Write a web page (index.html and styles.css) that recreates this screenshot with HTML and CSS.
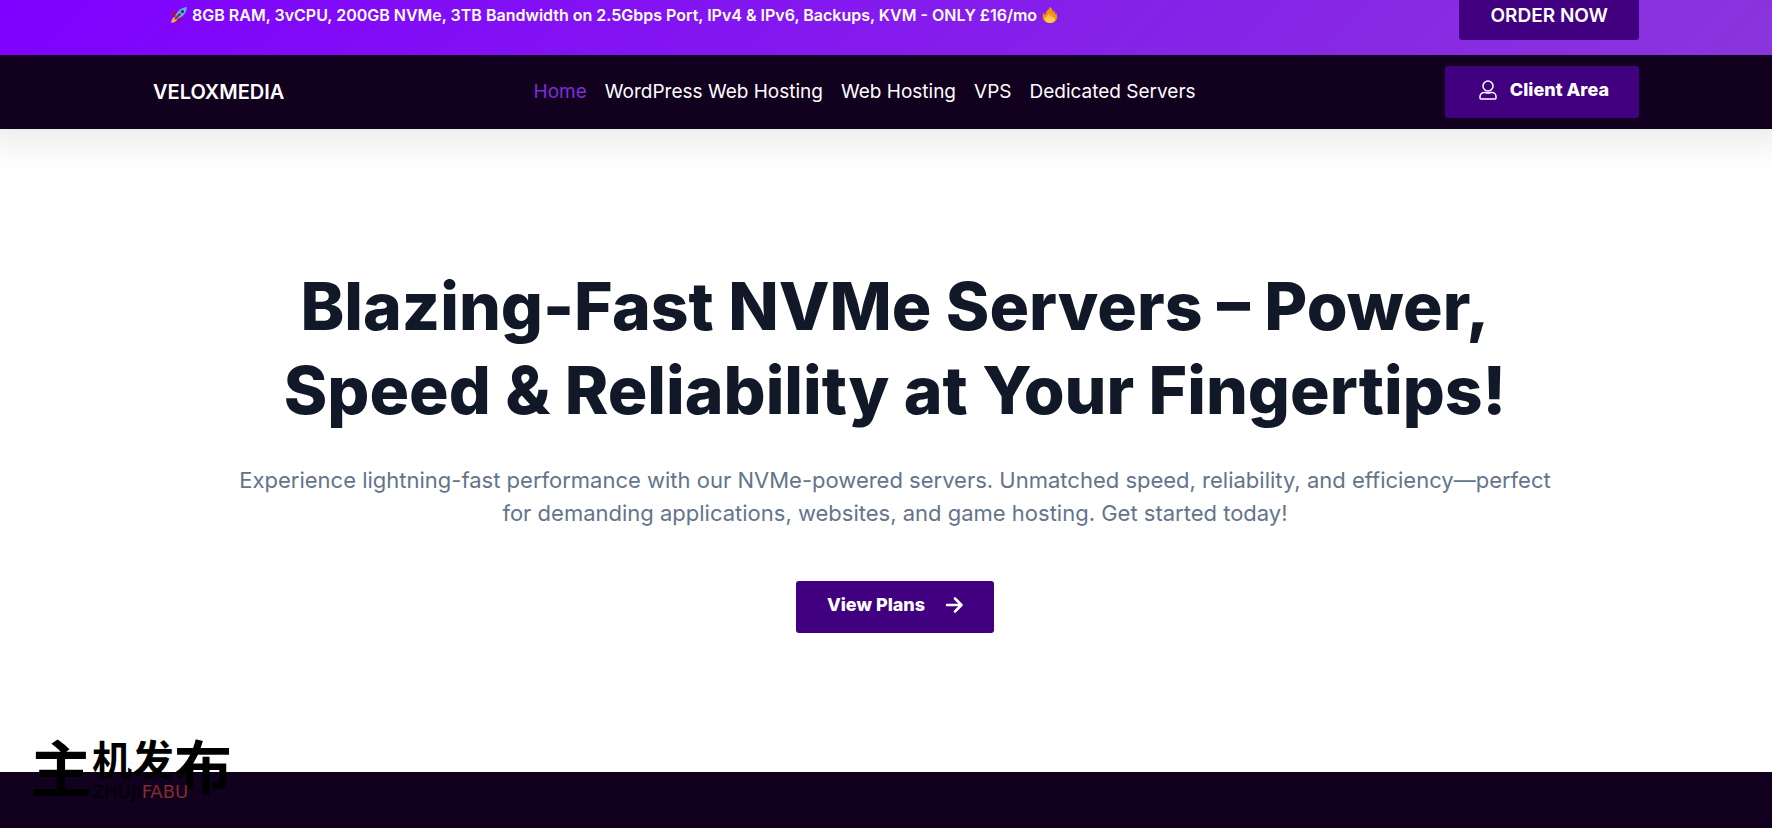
FILE: index.html
```html
<!DOCTYPE html>
<html lang="en">
<head>
<meta charset="utf-8">
<title>VeloxMedia</title>
<link rel="stylesheet" href="styles.css">
</head>
<body>
<aside class="promo">
  <div class="container promo-row">
    <p class="promo-text">
      <svg class="emoji" viewBox="0 0 16 16" aria-hidden="true"><path fill="#a5142b" d="M6 4 2 5.500.8 9l3.400-.8zM12 10l-1.500 4-3.700 1.500L8 12z"/><path fill="#55acee" d="M16 0c-5 .3-9.600 3.200-12 9.300L6.700 12C12.800 9.600 15.700 5 16 0z"/><path fill="#ffac33" d="M3.800 10C1.500 10.200.5 13 .2 15.800 3 15.500 5.800 14.500 6 12.200z"/><path fill="#a5142b" d="m8.500 6 1.500 1.500-6 5.200-.7-.7z"/><circle cx="11.500" cy="4.500" r="1.500" fill="#292f33"/></svg>
      <span>8GB RAM, 3vCPU, 200GB NVMe, 3TB Bandwidth on 2.5Gbps Port, IPv4 &amp; IPv6, Backups, KVM - ONLY £16/mo</span>
      <svg class="emoji" viewBox="0 0 16 16" aria-hidden="true"><path fill="#f4900c" d="M2.500 4.800c-.7 1.600-.3 2.500.3 3.100C4 7.500 3.500 5.500 5 3.700 6.200 2.300 8 2 7.300 0c2.700.9 3.500 3 3.400 5.600.8-.5 1-1.700.6-2.600 1.800 1 1.700 3.100 2 4.200.5-.5.8-1 .7-1.800 2 3.600 2.100 10.600-6 10.600C1 16-1.300 9 2.500 4.800z"/><path fill="#ffcc4d" d="M3 9.500c.4 1 1 1.300 1.600 1.100C4.900 9 6.200 8.500 6 6.500c1.600.8 2 2.300 1.700 4 1.300-.3 1-2 1-3 1.700 1 1.600 2.500 2 3.500.7-.1 1.200-.6 1.400-1.500C14 13 12 15.900 8 15.900S1.600 12.800 3 9.500z"/></svg>
    </p>
    <button class="btn btn-order" type="button">ORDER NOW</button>
  </div>
</aside>
<header class="header">
  <div class="container header-row">
    <a class="brand" href="#">VELOXMEDIA</a>
    <nav class="nav">
      <a class="active" href="#">Home</a>
      <a href="#">WordPress Web Hosting</a>
      <a href="#">Web Hosting</a>
      <a href="#">VPS</a>
      <a href="#">Dedicated Servers</a>
    </nav>
    <button class="btn btn-client" type="button">
      <svg class="icon-user" viewBox="0 0 18 20" fill="none" stroke="currentColor" stroke-width="1.500" aria-hidden="true"><circle cx="9" cy="6" r="5"/><path d="M5 12.500h1.500q2.500 1 5 0H13a4 4 0 0 1 4 4V18q0 1-1 1H2q-1 0-1-1v-1.500a4 4 0 0 1 4-4z"/></svg>
      Client Area
    </button>
  </div>
</header>
<main class="hero">
  <h1>Blazing-Fast NVMe Servers – Power,<br>Speed &amp; Reliability at Your Fingertips!</h1>
  <p class="lead">Experience lightning-fast performance with our NVMe-powered servers. Unmatched speed, reliability, and efficiency—perfect<br>for demanding applications, websites, and game hosting. Get started today!</p>
  <button class="btn btn-plans" type="button">
    View Plans
    <svg class="icon-arrow" viewBox="0 0 18 18" fill="none" stroke="currentColor" stroke-width="2.500" stroke-linecap="round" stroke-linejoin="round" aria-hidden="true"><path d="M2 9h14M10 2.500 16.500 9 10 15.500"/></svg>
  </button>
</main>
<section class="band">
  <div class="mark">
    <span class="g1">主</span><span class="g2">机</span><span class="g3">发</span><span class="g4">布</span>
    <span class="latin">ZHUJI<b>FABU</b></span>
  </div>
</section>
</body>
</html>
```
FILE: styles.css
```css
* { box-sizing: border-box; }
body {
  margin: 0;
  min-height: 100vh;
  display: flex;
  flex-direction: column;
  overflow: hidden;
  background: #fff;
  color: #111827;
  font-family: Inter, "Liberation Sans", sans-serif;
}
a { color: inherit; text-decoration: none; }
p, h1 { margin: 0; }
.container {
  display: flex;
  justify-content: space-between;
  padding: 0 133px 0 153px;
}
.btn {
  display: flex;
  align-items: center;
  border: 0;
  border-radius: 3px;
  background: #40007f;
  color: #fff;
  font-family: inherit;
  font-size: 18px;
  line-height: 24px;
  font-weight: 800;
  white-space: nowrap;
}
.promo {
  background: linear-gradient(135deg, #7f00ff, #8a35dc);
  color: #fff;
}
.promo-row { height: 55px; align-items: flex-start; padding-left: 171px; }
.promo-text {
  display: flex;
  align-items: center;
  gap: 5px;
  padding-top: 3px;
  font-size: 16px;
  line-height: 24px;
  font-weight: 600;
  white-space: nowrap;
}
.emoji { width: 16px; height: 18px; }
.btn-order {
  padding: 4px 31px 12px;
  border-radius: 0 0 3px 3px;
  font-size: 19px;
  font-weight: 600;
}
.header {
  background: #12001f;
  color: #fff;
  box-shadow: 0 -10px 40px 20px rgba(0, 0, 0, 0.1);
  clip-path: inset(0 0 -60px);
}
.header-row { height: 74px; align-items: center; }
.brand { font-size: 20px; font-weight: 600; }
.nav { display: flex; gap: 18px; font-size: 19px; line-height: 24px; }
.nav .active { color: #7c2fd8; }
.btn-client { padding: 12px 30px 16px 34px; gap: 13px; }
.icon-user { width: 18px; height: 20px; }
.hero {
  flex: 1;
  display: flex;
  flex-direction: column;
  align-items: center;
  padding: 135px 0 139px 18px;
  text-align: center;
}
h1 { font-size: 66px; line-height: 84px; font-weight: 800; }
.lead {
  margin-top: 32px;
  color: #64748b;
  font-size: 22px;
  line-height: 33px;
}
.btn-plans { margin-top: 51px; padding: 12px 31px 16px; gap: 20px; }
.icon-arrow { width: 18px; height: 18px; }
.band {
  position: relative;
  height: 56px;
  background: #12001f;
}
.mark {
  position: absolute;
  left: 30px;
  top: -38px;
  display: flex;
  align-items: flex-start;
  color: #000;
  font-family: "Noto Sans CJK SC", sans-serif;
  font-weight: 700;
}
.g1 { font-size: 62px; line-height: 64px; }
.g2 { font-size: 40px; line-height: 48px; }
.g3 { font-size: 42px; line-height: 48px; }
.g4 { font-size: 58px; line-height: 60px; }
.latin {
  position: absolute;
  left: 62px;
  top: 48px;
  font-family: "DejaVu Sans", sans-serif;
  font-size: 18px;
  line-height: 20px;
  font-weight: 400;
}
.latin b { color: #7e2f2b; font-weight: 400; }
```
